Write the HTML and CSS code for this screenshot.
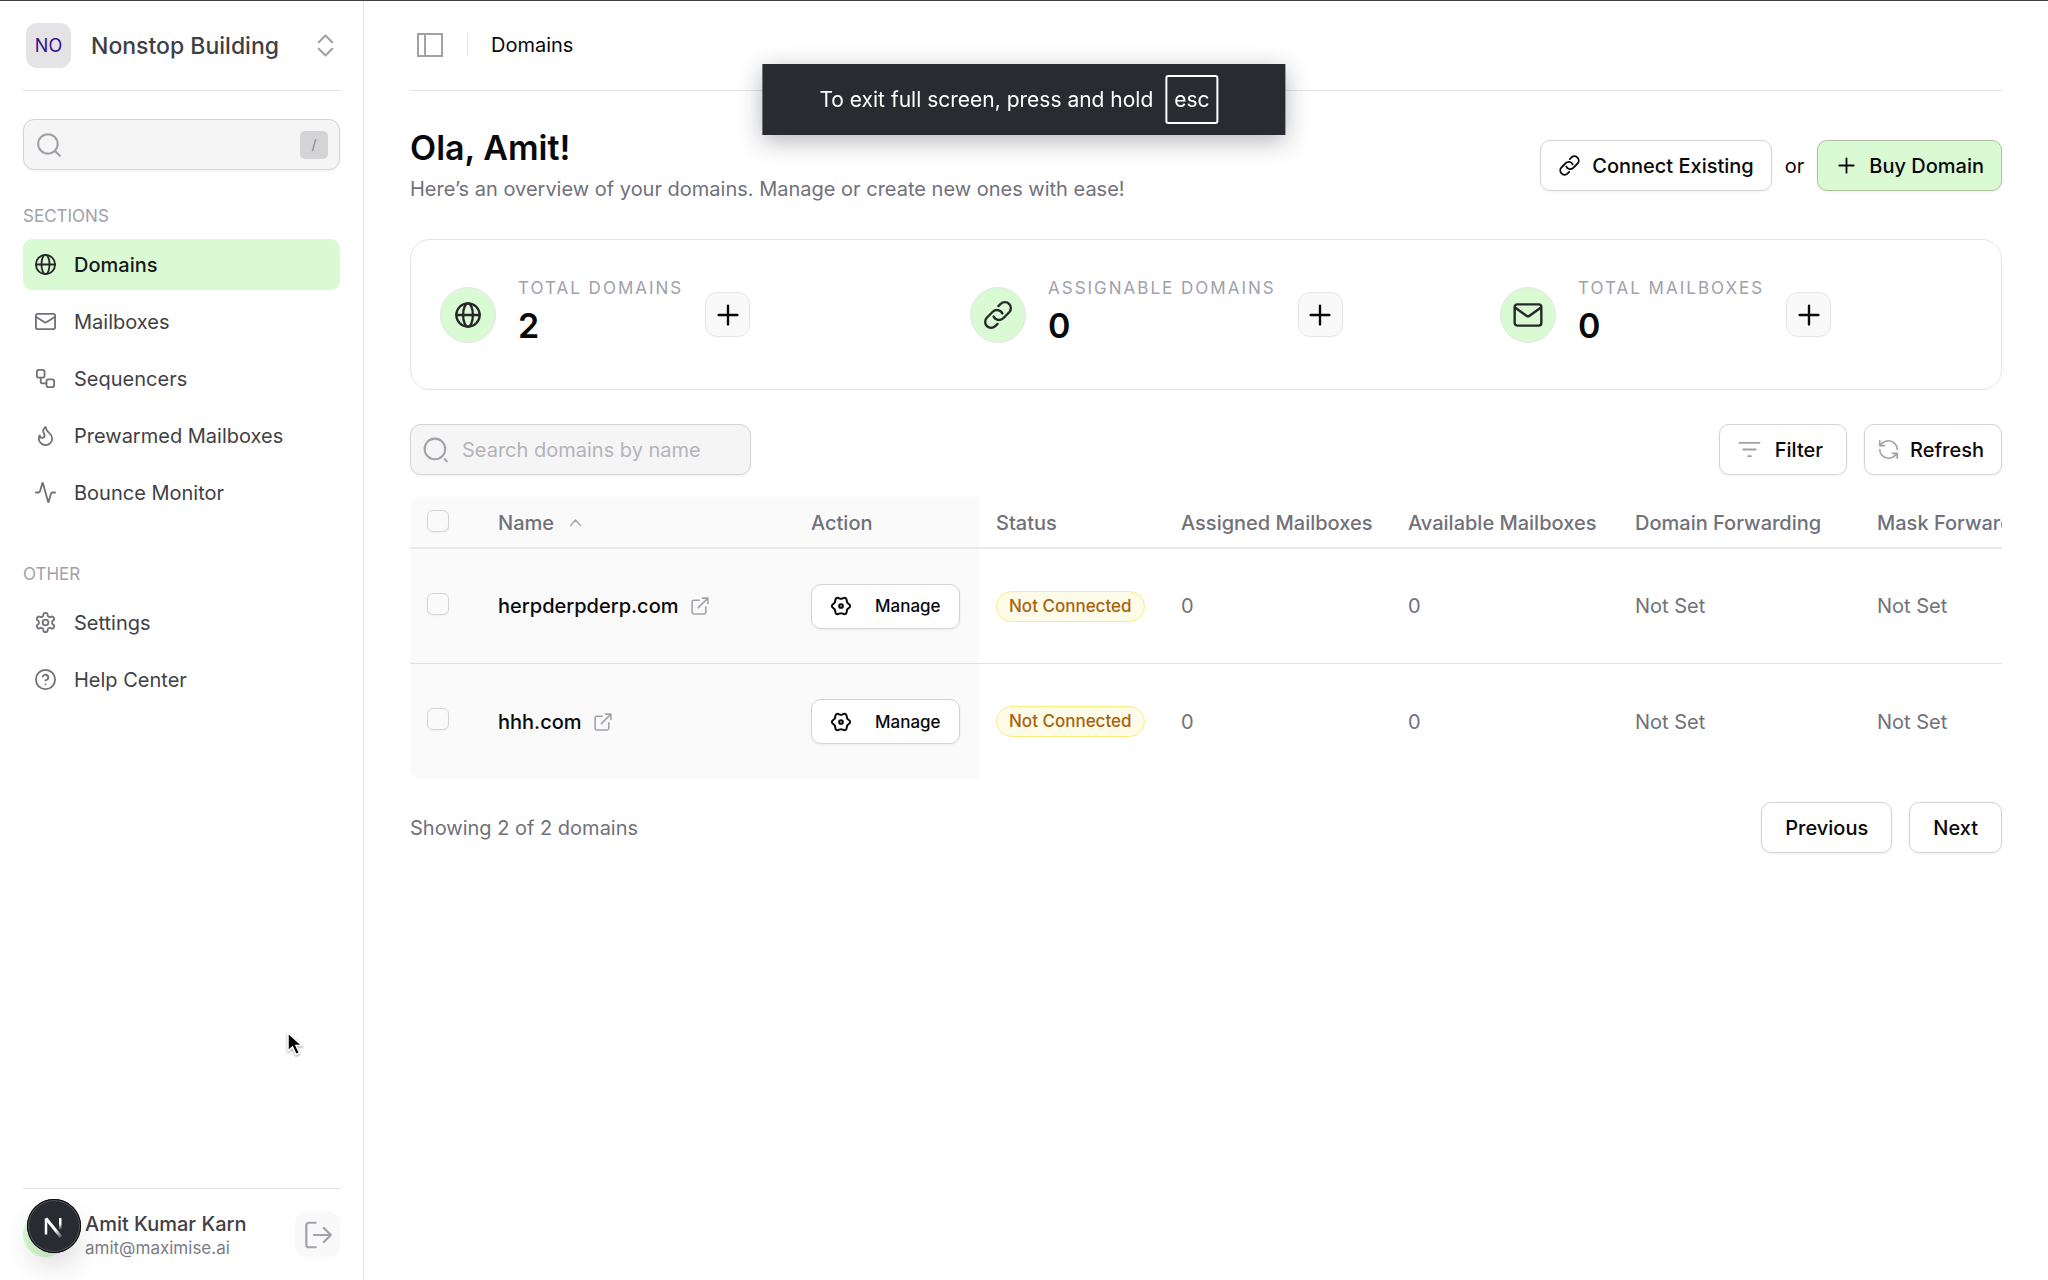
FILE: index.html
```html
<!DOCTYPE html>
<html lang="en">
  <head>
    <meta charset="utf-8">
    <meta name="viewport" content="width=device-width, initial-scale=1" />
    <title>Domains</title>
    <link rel="stylesheet" href="styles.css">
  </head>
  <body>

    <!-- icons used more than once -->
    <svg class="sprite" aria-hidden="true">
      <symbol id="i-globe" viewBox="0 0 24 24"><circle cx="12" cy="12" r="10"/><ellipse cx="12" cy="12" rx="4.2" ry="10"/><path d="M2 12h20"/></symbol>
      <symbol id="i-link" viewBox="0 0 24 24"><path d="M13.19 8.69a4.5 4.5 0 0 1 1.24 7.24l-4.5 4.5a4.5 4.5 0 0 1-6.36-6.36l1.75-1.75m13.36-.64 1.75-1.75a4.5 4.5 0 0 0-6.36-6.36l-4.5 4.5a4.5 4.5 0 0 0 1.24 7.24" transform="matrix(-1 0 0 1 24 0) rotate(90 12 12)"/></symbol>
      <symbol id="i-plus" viewBox="0 0 24 24"><path d="M12 4.5v15M4.5 12h15"/></symbol>
      <symbol id="i-external" viewBox="0 0 24 24"><path d="M11 5H4.5a2 2 0 0 0-2 2v12.5a2 2 0 0 0 2 2H17a2 2 0 0 0 2-2V13M15 2.5h6.5V9M21.5 2.5 10 14"/></symbol>
      <symbol id="i-manage" viewBox="0 0 24 24"><path d="M12 4.2C13.6 4.2 15.3 2.4 17 3.3C18.7 4.3 18 6.7 18.8 8.1C19.6 9.5 22 10.1 22 12C22 13.9 19.6 14.5 18.8 15.9C18 17.3 18.7 19.7 17 20.7C15.3 21.6 13.6 19.8 12 19.8C10.4 19.8 8.7 21.6 7 20.7C5.3 19.7 6 17.3 5.2 15.9C4.4 14.5 2 13.9 2 12C2 10.1 4.4 9.5 5.2 8.1C6 6.7 5.3 4.3 7 3.3C8.7 2.4 10.4 4.2 12 4.2z"/><circle cx="12" cy="12" r="2"/></symbol>
    </svg>

    <div class="app">
      <aside class="sidebar">
        <button class="workspace" type="button">
          <span class="workspace-badge">NO</span>
          <span class="workspace-name">Nonstop Building</span>
          <svg class="icon workspace-arrows" viewBox="0 0 24 24"><path d="m5 8.5 7-7 7 7M5 15.5l7 7 7-7"/></svg>
        </button>

        <div class="search sidebar-search">
          <svg class="icon search-icon" viewBox="0 0 24 24"><circle cx="11" cy="11" r="9"/><path d="m17.5 17.5 4.5 4.5"/></svg>
          <input class="search-input" type="text" aria-label="Search">
          <kbd class="search-key">/</kbd>
        </div>

        <h2 class="nav-title">SECTIONS</h2>
        <nav class="nav">
          <a class="nav-item active" href="#"><svg class="icon"><use href="#i-globe"/></svg>Domains</a>
          <a class="nav-item" href="#"><svg class="icon" viewBox="0 0 24 24"><rect x="2" y="4" width="20" height="16" rx="2"/><path d="m22 7-8.97 5.7a1.94 1.94 0 0 1-2.06 0L2 7"/></svg>Mailboxes</a>
          <a class="nav-item" href="#"><svg class="icon" viewBox="0 0 24 24"><rect x="3" y="3" width="8" height="8" rx="2"/><path d="M7 11v4a2 2 0 0 0 2 2h4"/><rect x="13" y="13" width="8" height="8" rx="2"/></svg>Sequencers</a>
          <a class="nav-item" href="#"><svg class="icon" viewBox="0 0 24 24"><path d="M8.5 14.5A2.5 2.5 0 0 0 11 12c0-1.38-.5-2-1-3-1.07-2.14-.22-4.05 2-6 .5 2.5 2 4.9 4 6.5 2 1.6 3 3.5 3 5.5a7 7 0 1 1-14 0c0-1.15.43-2.29 1-3a2.5 2.5 0 0 0 2.5 2.5z"/></svg>Prewarmed Mailboxes</a>
          <a class="nav-item" href="#"><svg class="icon" viewBox="0 0 24 24"><path d="M22 12h-2.48a2 2 0 0 0-1.93 1.46l-2.35 8.36a.25.25 0 0 1-.48 0L9.24 2.18a.25.25 0 0 0-.48 0l-2.35 8.36A2 2 0 0 1 4.49 12H2"/></svg>Bounce Monitor</a>
        </nav>

        <h2 class="nav-title nav-title-other">OTHER</h2>
        <nav class="nav">
          <a class="nav-item" href="#"><svg class="icon" viewBox="0 0 24 24"><path d="M12.22 2h-.44a2 2 0 0 0-2 2v.18a2 2 0 0 1-1 1.73l-.43.25a2 2 0 0 1-2 0l-.15-.08a2 2 0 0 0-2.73.73l-.22.38a2 2 0 0 0 .73 2.73l.15.1a2 2 0 0 1 1 1.72v.51a2 2 0 0 1-1 1.74l-.15.09a2 2 0 0 0-.73 2.73l.22.38a2 2 0 0 0 2.73.73l.15-.08a2 2 0 0 1 2 0l.43.25a2 2 0 0 1 1 1.73V20a2 2 0 0 0 2 2h.44a2 2 0 0 0 2-2v-.18a2 2 0 0 1 1-1.73l.43-.25a2 2 0 0 1 2 0l.15.08a2 2 0 0 0 2.73-.73l.22-.39a2 2 0 0 0-.73-2.73l-.15-.08a2 2 0 0 1-1-1.74v-.5a2 2 0 0 1 1-1.74l.15-.09a2 2 0 0 0 .73-2.73l-.22-.38a2 2 0 0 0-2.73-.73l-.15.08a2 2 0 0 1-2 0l-.43-.25a2 2 0 0 1-1-1.73V4a2 2 0 0 0-2-2z"/><circle cx="12" cy="12" r="3"/></svg>Settings</a>
          <a class="nav-item" href="#"><svg class="icon" viewBox="0 0 24 24"><circle cx="12" cy="12" r="10"/><path d="M9.09 9a3 3 0 0 1 5.83 1c0 2-3 3-3 3M12 17h.01"/></svg>Help Center</a>
        </nav>

        <div class="account">
          <span class="account-avatar"></span>
          <div class="account-text">
            <div class="account-name">Amit Kumar Karn</div>
            <div class="account-email">amit@maximise.ai</div>
          </div>
          <button class="logout" type="button" aria-label="Log out">
            <svg class="icon" viewBox="0 0 24 24"><path d="M10 1.5H4a2 2 0 0 0-2 2v17a2 2 0 0 0 2 2h6M8.5 12H23M17 6l6 6-6 6"/></svg>
          </button>
        </div>
      </aside>

      <main class="main">
        <header class="topbar">
          <button class="panel-toggle" type="button" aria-label="Toggle sidebar">
            <svg class="icon" viewBox="0 0 28 28"><path d="M2 3h24v22H2zM9 3v22"/></svg>
          </button>
          <span class="topbar-divider"></span>
          <span class="topbar-page">Domains</span>
        </header>

        <section class="intro">
          <div>
            <h1 class="intro-title">Ola, Amit!</h1>
            <p class="intro-text">Here’s an overview of your domains. Manage or create new ones with ease!</p>
          </div>
          <div class="intro-actions">
            <button class="btn" type="button"><svg class="icon"><use href="#i-link"/></svg>Connect Existing</button>
            <span>or</span>
            <button class="btn btn-green" type="button"><svg class="icon"><use href="#i-plus"/></svg>Buy Domain</button>
          </div>
        </section>

        <section class="stats">
          <div class="stat">
            <span class="stat-icon"><svg class="icon"><use href="#i-globe"/></svg></span>
            <div class="stat-text">
              <div class="stat-label">TOTAL DOMAINS</div>
              <div class="stat-value">2</div>
            </div>
            <button class="stat-add" type="button" aria-label="Add domain"><svg class="icon"><use href="#i-plus"/></svg></button>
          </div>
          <div class="stat">
            <span class="stat-icon"><svg class="icon icon-large"><use href="#i-link"/></svg></span>
            <div class="stat-text">
              <div class="stat-label">ASSIGNABLE DOMAINS</div>
              <div class="stat-value">0</div>
            </div>
            <button class="stat-add" type="button" aria-label="Add assignable domain"><svg class="icon"><use href="#i-plus"/></svg></button>
          </div>
          <div class="stat">
            <span class="stat-icon"><svg class="icon icon-large" viewBox="0 0 24 24"><rect x="2" y="4" width="20" height="16" rx="2"/><path d="m2.5 6.5 8.3 6a2 2 0 0 0 2.4 0l8.3-6"/></svg></span>
            <div class="stat-text">
              <div class="stat-label">TOTAL MAILBOXES</div>
              <div class="stat-value">0</div>
            </div>
            <button class="stat-add" type="button" aria-label="Add mailbox"><svg class="icon"><use href="#i-plus"/></svg></button>
          </div>
        </section>

        <div class="toolbar">
          <div class="search table-search">
            <svg class="icon search-icon" viewBox="0 0 24 24"><circle cx="11" cy="11" r="9.5"/><path d="m20 20.5 2 2"/></svg>
            <input class="search-input" type="text" placeholder="Search domains by name" aria-label="Search domains by name">
          </div>
          <div class="toolbar-actions">
            <button class="btn btn-filter" type="button"><svg class="icon icon-gray" viewBox="0 0 24 24"><path d="M1.500 5h21M5.500 12h13M10.500 19h3"/></svg>Filter</button>
            <button class="btn btn-refresh" type="button"><svg class="icon icon-gray" viewBox="0 0 24 24"><path d="M22 12A10 10 0 0 0 12 2C8.5 2 6 3.5 3.5 6L2 7.5M2 2v5.5h5.5M2 12a10 10 0 0 0 10 10c3.5 0 6-1.5 8.5-4l1.5-1.5M16.5 16.5H22V22"/></svg>Refresh</button>
          </div>
        </div>

        <div class="table-wrap">
          <table class="domains">
            <colgroup>
              <col class="col-check"><col class="col-name"><col class="col-action"><col class="col-status">
              <col class="col-assigned"><col class="col-available"><col class="col-forward"><col class="col-mask">
            </colgroup>
            <thead>
              <tr>
                <th class="pinned"><input class="check" type="checkbox" aria-label="Select all"></th>
                <th class="pinned">Name <svg class="icon sort" viewBox="0 0 24 24"><path d="m4 17 8-9 8 9"/></svg></th>
                <th class="pinned">Action</th>
                <th>Status</th>
                <th>Assigned Mailboxes</th>
                <th>Available Mailboxes</th>
                <th>Domain Forwarding</th>
                <th>Mask Forwarding</th>
              </tr>
            </thead>
            <tbody>
              <tr>
                <td class="pinned"><input class="check" type="checkbox" aria-label="Select herpderpderp.com"></td>
                <td class="pinned"><a class="domain-link" href="#">herpderpderp.com<svg class="icon"><use href="#i-external"/></svg></a></td>
                <td class="pinned"><button class="btn btn-manage" type="button"><svg class="icon"><use href="#i-manage"/></svg>Manage</button></td>
                <td><span class="badge">Not Connected</span></td>
                <td>0</td>
                <td>0</td>
                <td>Not Set</td>
                <td>Not Set</td>
              </tr>
              <tr>
                <td class="pinned"><input class="check" type="checkbox" aria-label="Select hhh.com"></td>
                <td class="pinned"><a class="domain-link" href="#">hhh.com<svg class="icon"><use href="#i-external"/></svg></a></td>
                <td class="pinned"><button class="btn btn-manage" type="button"><svg class="icon"><use href="#i-manage"/></svg>Manage</button></td>
                <td><span class="badge">Not Connected</span></td>
                <td>0</td>
                <td>0</td>
                <td>Not Set</td>
                <td>Not Set</td>
              </tr>
            </tbody>
          </table>
        </div>

        <footer class="pager">
          <span>Showing 2 of 2 domains</span>
          <div class="toolbar-actions">
            <button class="btn btn-page" type="button">Previous</button>
            <button class="btn btn-page" type="button">Next</button>
          </div>
        </footer>
      </main>
    </div>

    <div class="toast">To exit full screen, press and hold <kbd class="toast-key">esc</kbd></div>

    <!-- dev tools bubble -->
    <div class="dev-badge">
      <svg viewBox="0 0 54 54">
        <defs>
          <linearGradient id="fade-a" x1="0" y1="0" x2="0" y2="1"><stop offset="0.5" stop-color="#fff"/><stop offset="1" stop-color="#fff" stop-opacity="0"/></linearGradient>
          <linearGradient id="fade-b" gradientUnits="userSpaceOnUse" x1="27" y1="27" x2="36" y2="38"><stop offset="0.3" stop-color="#fff"/><stop offset="1" stop-color="#fff" stop-opacity="0.1"/></linearGradient>
        </defs>
        <path d="M19 35.5v-16" stroke="#fff" stroke-width="2.5"/>
        <path d="M19 19.5 34 38" stroke="url(#fade-b)" stroke-width="3"/>
        <rect x="32" y="19" width="2.5" height="12" fill="url(#fade-a)"/>
      </svg>
    </div>

    <svg class="cursor" viewBox="0 0 18 26"><path d="M2 2v18l4.5-4L10 23.5l3.5-1.5-3.5-7.5h6z"/></svg>

  </body>
</html>
```
FILE: styles.css
```css
* {
    box-sizing: border-box;
}
body {
    margin: 0;
    color: #09090b;
    background: #fff;
    font-family: Inter, "Liberation Sans", sans-serif;
    font-size: 20px;
    line-height: 28px;
}
button, input, kbd {
    font: inherit;
    color: inherit;
}
button {
    padding: 0;
    border: 0;
    background: none;
}
a {
    color: inherit;
    text-decoration: none;
}
h1, h2, p {
    margin: 0;
}
.sprite {
    position: absolute;
    width: 0;
    height: 0;
}
.icon {
    flex: none;
    width: 23px;
    height: 23px;
    fill: none;
    stroke: currentColor;
    stroke-width: 1.9;
    stroke-linecap: round;
    stroke-linejoin: round;
}
.icon-gray {
    color: #a1a1aa;
}

.app {
    display: flex;
    min-height: 100vh;
    border-top: 1px solid #3f3f46;
}

/* sidebar */
.sidebar {
    display: flex;
    flex-direction: column;
    flex: none;
    width: 364px;
    padding: 0 23px;
    border-right: 1px solid #e4e4e7;
}
.workspace {
    display: flex;
    align-items: center;
    height: 90px;
    padding: 0 3px;
    border-bottom: 1px solid #e0e0e2;
    text-align: left;
}
.workspace-badge {
    width: 45px;
    margin-right: 20px;
    border-radius: 11px;
    background: #e4e4e7;
    color: #3b0f8c;
    font-size: 18px;
    line-height: 45px;
    text-align: center;
}
.workspace-name {
    flex: 1;
    color: #3f3f46;
    font-size: 23px;
    font-weight: 500;
}
.workspace-arrows {
    color: #a1a1aa;
    stroke-width: 2.2;
}
.search {
    display: flex;
    align-items: center;
    height: 51px;
    padding: 0 11px 0 12px;
    border: 1px solid #d4d4d8;
    border-radius: 11px;
    background: #f5f5f5;
    box-shadow: 0 1px 3px rgb(0 0 0 / 6%);
}
.search-icon {
    width: 26px;
    height: 26px;
    color: #a1a1aa;
}
.search-input {
    flex: 1;
    min-width: 0;
    padding: 0 13px;
    border: 0;
    outline: 0;
    background: none;
}
.search-input::placeholder {
    color: #b4b4bb;
}
.search-key {
    width: 28px;
    border-radius: 5px;
    background: #d4d4d6;
    color: #85858d;
    font-size: 14px;
    line-height: 28px;
    text-align: center;
}
.sidebar-search {
    margin-top: 28px;
}
.nav-title {
    margin: 32px 0 9px;
    color: #a1a1aa;
    font-size: 17px;
    font-weight: 400;
    line-height: 28px;
}
.nav-title-other {
    margin-top: 42px;
}
.nav {
    display: flex;
    flex-direction: column;
    gap: 6px;
}
.nav-item {
    display: flex;
    align-items: center;
    gap: 17px;
    height: 51px;
    padding: 0 11px;
    border-radius: 9px;
    color: #3f3f46;
}
.nav-item .icon {
    color: #71717a;
}
.nav-item.active {
    background: #dafad4;
    color: #18181b;
    font-weight: 500;
}
.nav-item.active .icon {
    color: #27272a;
}
.account {
    display: flex;
    align-items: center;
    height: 92px;
    margin-top: auto;
    border-top: 1px solid #e4e4e7;
}
.account-avatar {
    width: 45px;
    height: 45px;
    margin-right: 17px;
    border-radius: 50%;
    background: #dafad4;
}
.account-text {
    flex: 1;
    padding-top: 2px;
}
.account-name {
    color: #3f3f46;
    font-weight: 500;
    line-height: 24px;
}
.account-email {
    color: #7c7c85;
    font-size: 17px;
    line-height: 24px;
}
.logout {
    display: grid;
    place-items: center;
    width: 45px;
    height: 45px;
    border-radius: 11px;
    background: #f9f9f9;
    color: #a1a1aa;
}
.logout .icon {
    width: 28px;
    height: 28px;
}

/* main column */
.main {
    flex: 1;
    min-width: 0;
    padding: 0 46px;
}
.topbar {
    display: flex;
    align-items: center;
    gap: 23px;
    height: 90px;
    padding: 0 0 2px 6px;
    border-bottom: 1px solid #e4e4e7;
}
.panel-toggle {
    display: flex;
    color: #a1a1aa;
}
.panel-toggle .icon {
    width: 28px;
    height: 28px;
    stroke-width: 2;
    stroke-linejoin: miter;
}
.topbar-divider {
    width: 1px;
    height: 23px;
    background: #e4e4e7;
}
.intro {
    display: flex;
    align-items: center;
    justify-content: space-between;
    padding: 33px 0 32px;
}
.intro-title {
    font-size: 34px;
    font-weight: 600;
    line-height: 48px;
}
.intro-text {
    color: #71717a;
    line-height: 35px;
}
.intro-actions {
    display: flex;
    align-items: center;
    gap: 13px;
}
.btn {
    display: inline-flex;
    align-items: center;
    gap: 11px;
    height: 51px;
    padding: 0 17px;
    border: 1px solid #d4d4d8;
    border-radius: 10px;
    background: #fff;
    font-weight: 500;
    box-shadow: 0 1px 3px rgb(0 0 0 / 6%);
}
.btn-green {
    border-color: #aebf9f;
    background: #dafad4;
}
.stats {
    display: grid;
    grid-template-columns: repeat(3, 1fr);
    height: 151px;
    border: 1px solid #e4e4e7;
    border-radius: 20px;
}
.stat {
    display: flex;
    align-items: center;
    gap: 22px;
    padding-left: 29px;
}
.stat-icon {
    display: grid;
    place-items: center;
    width: 56px;
    height: 56px;
    border: 1px solid #e4e4e7;
    border-radius: 50%;
    background: #dafad4;
    color: #27272a;
}
.stat-icon .icon {
    width: 28px;
    height: 28px;
    stroke-width: 2;
}
.stat-icon .icon-large {
    width: 32px;
    height: 32px;
    stroke-width: 1.8;
}
.stat-text {
    padding-bottom: 6px;
}
.stat-label {
    color: #a1a1aa;
    font-size: 17px;
    letter-spacing: 2px;
    line-height: 28px;
}
.stat-value {
    font-size: 34px;
    font-weight: 600;
    line-height: 47px;
}
.stat-add {
    display: grid;
    place-items: center;
    width: 45px;
    height: 45px;
    border: 1px solid #e4e4e7;
    border-radius: 12px;
    background: #f9f9f9;
}
.stat-add .icon {
    width: 30px;
    height: 30px;
}
.toolbar {
    display: flex;
    justify-content: space-between;
    margin: 34px 0 22px;
}
.toolbar-actions {
    display: flex;
    gap: 17px;
}
.table-search {
    width: 341px;
}
.btn-filter {
    gap: 14px;
    padding: 0 23px 0 18px;
}
.btn-refresh {
    padding-left: 13px;
}
.btn-refresh .icon {
    width: 21px;
    height: 21px;
}

/* domains table, clipped on the right when it does not fit */
.table-wrap {
    overflow: hidden;
    border-radius: 12px 0 0 12px;
}
.domains {
    width: 1680px;
    table-layout: fixed;
    border-collapse: separate;
    border-spacing: 0;
    color: #71717a;
}
.col-check {
    width: 71px;
}
.col-name {
    width: 313px;
}
.col-action, .col-status {
    width: 185px;
}
.col-assigned, .col-available {
    width: 227px;
}
.col-forward {
    width: 242px;
}
.domains th, .domains td {
    padding: 0 17px;
    text-align: left;
    white-space: nowrap;
}
.domains th {
    height: 52px;
    padding-top: 2px;
    border-bottom: 2px solid #ebebed;
    font-weight: 500;
}
.domains td {
    height: 115px;
}
.domains tr:not(:last-child) td {
    border-bottom: 1px solid #e0e0e2;
}
.pinned {
    background: #fafafa;
}
.check {
    display: block;
    width: 22px;
    height: 22px;
    margin: 0 0 5px;
    appearance: none;
    border: 1px solid #d4d4d8;
    border-radius: 6px;
    background: #fafafa;
    box-shadow: 0 1px 2px rgb(0 0 0 / 5%);
}
.sort {
    width: 15px;
    height: 15px;
    margin-left: 9px;
    color: #a1a1aa;
    stroke-width: 2.2;
}
.domain-link {
    display: flex;
    align-items: center;
    gap: 11px;
    color: #09090b;
    font-weight: 500;
}
.domain-link .icon {
    width: 20px;
    height: 20px;
    color: #a1a1aa;
}
.btn-manage {
    gap: 23px;
    height: 45px;
    padding: 0 18px;
    color: #09090b;
    font-size: 17px;
}
.btn-manage .icon {
    width: 22px;
    height: 22px;
    stroke-width: 2.2;
}
.badge {
    display: inline-block;
    padding: 0 12px;
    border: 1px solid #fdec80;
    border-radius: 16px;
    background: #fefce8;
    color: #a8620f;
    font-size: 17px;
    font-weight: 500;
    line-height: 29px;
}
.pager {
    display: flex;
    align-items: center;
    justify-content: space-between;
    margin-top: 23px;
    color: #71717a;
}
.btn-page {
    padding: 0 23px;
    color: #09090b;
}

/* things that float over the page */
.toast {
    position: fixed;
    top: 64px;
    left: 50%;
    display: flex;
    align-items: center;
    gap: 12px;
    height: 71px;
    padding: 0 67px 0 57px;
    background: #282b30;
    color: #fff;
    font-size: 21px;
    white-space: nowrap;
    transform: translateX(-50%);
    box-shadow: 0 6px 24px rgb(24 24 45 / 32%);
}
.toast-key {
    padding: 0 7px;
    border: 2px solid #fff;
    border-radius: 3px;
    line-height: 45px;
}
.dev-badge {
    position: fixed;
    bottom: 27px;
    left: 27px;
    width: 54px;
    height: 54px;
    border-radius: 50%;
    background: #282b30;
    box-shadow: inset 0 0 0 1px #09090b, inset 0 0 0 2px #52525b, 0 16px 32px -8px rgb(0 0 0 / 24%);
}
.dev-badge svg {
    display: block;
}
.cursor {
    position: fixed;
    top: 1031px;
    left: 286px;
    width: 18px;
    height: 26px;
    stroke: #fff;
    stroke-width: 1.5;
    filter: drop-shadow(0 1px 1px rgb(0 0 0 / 40%));
}
```
